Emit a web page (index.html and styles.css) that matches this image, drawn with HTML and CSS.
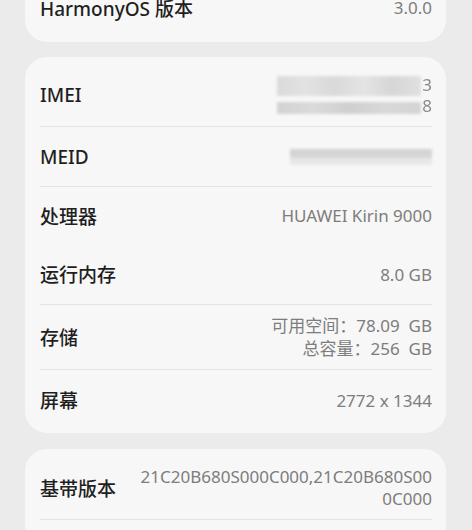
FILE: index.html
```html
<!DOCTYPE html>
<html lang="zh-CN">
<head>
<meta charset="utf-8">
<link rel="stylesheet" href="styles.css">
</head>
<body>
<div class="page">
  <section class="card card-first">
    <div class="row row-top">
      <span class="label">HarmonyOS 版本</span>
      <span class="value">3.0.0</span>
    </div>
  </section>

  <section class="card card-mid">
    <div class="row row-imei">
      <span class="label">IMEI</span>
      <div class="masked masked-imei">
        <div class="blur-lines">
          <div class="blk b1"></div>
          <div class="blk b2"></div>
        </div>
        <div class="tail"><span>3</span><span>8</span></div>
      </div>
    </div>
    <div class="divider"></div>
    <div class="row row-meid">
      <span class="label">MEID</span>
      <div class="masked masked-meid"><div class="blk b3"></div></div>
    </div>
    <div class="divider"></div>
    <div class="row row-cpu">
      <span class="label">处理器</span>
      <span class="value">HUAWEI Kirin 9000</span>
    </div>
    <div class="row row-ram">
      <span class="label">运行内存</span>
      <span class="value">8.0 GB</span>
    </div>
    <div class="divider"></div>
    <div class="row row-storage">
      <span class="label">存储</span>
      <div class="value multi">
        <div>可用空间：78.09&nbsp; GB</div>
        <div>总容量：256&nbsp; GB</div>
      </div>
    </div>
    <div class="divider"></div>
    <div class="row row-screen">
      <span class="label">屏幕</span>
      <span class="value">2772 x 1344</span>
    </div>
  </section>

  <section class="card card-last">
    <div class="row row-baseband">
      <span class="label">基带版本</span>
      <span class="value wrap">21C20B680S000C000,21C20B680S000C000</span>
    </div>
    <div class="divider"></div>
    <div class="row row-next"></div>
  </section>
</div>
</body>
</html>
```

FILE: styles.css
```css
html, body {
  margin: 0;
  padding: 0;
  background: #ebebeb;
  height: 530px;
  overflow: hidden;
}

.page {
  padding: 0 26px 0 25px;
  display: flex;
  flex-direction: column;
  gap: 15px;
  font-family: "Noto Sans", "Noto Sans CJK SC", sans-serif;
}

.card {
  background: #f7f7f7;
  border-radius: 22px;
  padding: 6px 14px 4px 15px;
}

.card-first {
  margin-top: -27px;
  padding-top: 0;
  padding-bottom: 0;
}

.card-mid {
  padding-top: 7px;
  padding-bottom: 3px;
}

.card-last {
  margin-top: 1px;
  padding-top: 7px;
}

.row {
  display: flex;
  align-items: center;
  justify-content: space-between;
  height: 58px;
}

.row-top { height: 69px; }
.row-imei { height: 62px; }
.row-meid { height: 59px; }
.row-cpu { height: 57px; }
.row-ram { height: 60px; }
.row-storage { height: 64px; }
.row-screen { height: 60px; }
.row-baseband { height: 63px; }
.row-next { height: 40px; }

.label {
  font-size: 19px;
  font-weight: 500;
  color: #1f1f1f;
  white-space: nowrap;
}

.value {
  font-size: 17px;
  color: #7d7d7d;
  text-align: right;
}

.multi {
  line-height: 23px;
}

.wrap {
  line-height: 22px;
  max-width: 300px;
  word-break: break-all;
  margin-left: 14px;
}

.divider {
  height: 1px;
  background: #e3e3e3;
}

.masked {
  display: flex;
  align-items: center;
}

.masked-imei {
  gap: 1px;
}

.blur-lines {
  width: 144px;
  height: 38px;
  display: flex;
  flex-direction: column;
  justify-content: space-between;
  filter: blur(1.5px);
}

.blk {
  border-radius: 1px;
}

.b1 {
  height: 20px;
  background: linear-gradient(90deg, #dadada 0%, #e2e2e2 20%, #d9d9d9 40%, #e4e4e4 60%, #d6d6d6 80%, #e0e0e0 100%);
}

.b2 {
  height: 12px;
  background: linear-gradient(90deg, #d2d2d2 0%, #dadada 25%, #cfcfcf 50%, #d8d8d8 75%, #d4d4d4 100%);
}

.tail {
  display: flex;
  flex-direction: column;
  line-height: 21px;
  font-size: 17px;
  color: #8a8a8a;
  filter: blur(0.3px);
}

.b3 {
  width: 142px;
  height: 16px;
  background: linear-gradient(180deg, #d2d2d2 0%, #d6d6d6 50%, #e6e6e6 60%, #e8e8e8 100%);
  filter: blur(1.5px);
}
```
